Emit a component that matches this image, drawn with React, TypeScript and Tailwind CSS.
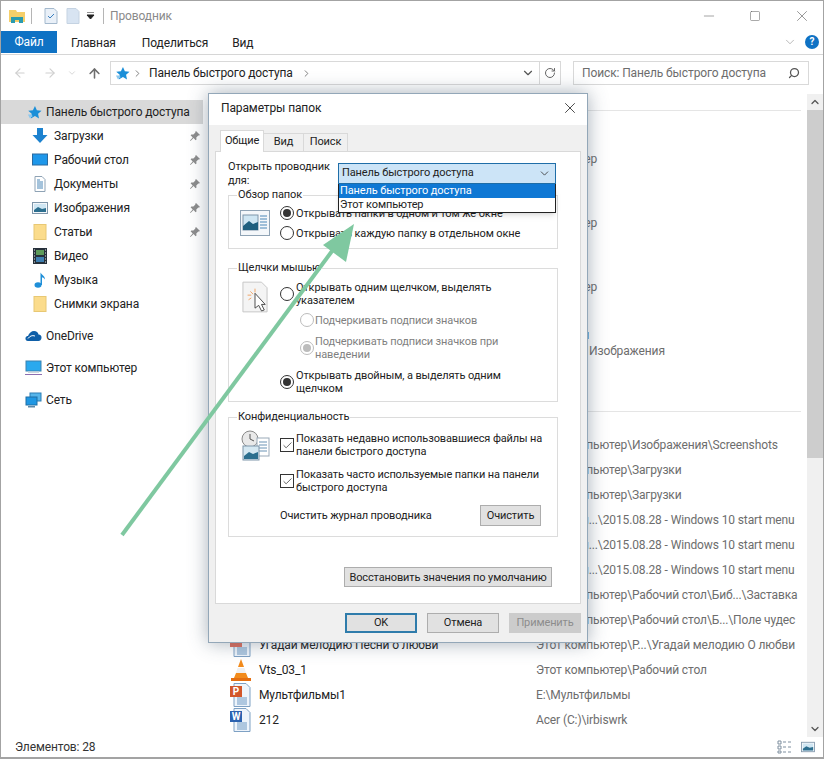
import React from "react";
import { Check, ChevronDown, ChevronRight, ChevronUp, RotateCw, Search, ArrowLeft, ArrowRight, ArrowUp, X, Minus, Square } from "lucide-react";

function Star({ s = 15 }: { s?: number }) {
  return (
    <svg width={s} height={s} viewBox="0 0 16 16" className="shrink-0">
      <path d="M8.500 1l2 4.600 5 .5-3.700 3.300 1 4.900-4.300-2.500L4 14.300l1-4.900L1.300 6.100l5-.5z" fill="#1b8fd8" />
      <path d="M1 10h4l1 2-3 2z" fill="#8cc8ee" />
    </svg>
  );
}
function Pin() {
  return (
    <svg width="12" height="12" viewBox="0 0 12 12" className="shrink-0">
      <path d="M7 1l4 4-1 .6-.7-.2-2 2 .2 2-.9.8-2-2.200L1.500 11 1 10.500 3.700 7.400 1.600 5.300l.8-.9 2 .2 2-2-.2-.7z" fill="#8d8d8d" />
    </svg>
  );
}
function Folder() {
  return (
    <svg width="14" height="16" viewBox="0 0 14 16" className="shrink-0">
      <rect x="1" y="0.500" width="12" height="15" fill="#fbdc8c" stroke="#e8c874" />
    </svg>
  );
}
function Download() {
  return (
    <svg width="16" height="16" viewBox="0 0 16 16" className="shrink-0">
      <path d="M5 0h6v7h4.500L8 15 .5 7H5z" fill="#1c82cf" />
    </svg>
  );
}
function Desktop() {
  return (
    <svg width="16" height="16" viewBox="0 0 16 16" className="shrink-0">
      <rect x="0.500" y="2" width="15" height="11" fill="#1e97ea" stroke="#2a6aa0" />
    </svg>
  );
}
function Doc() {
  return (
    <svg width="16" height="16" viewBox="0 0 16 16" className="shrink-0">
      <path d="M3 .5h7l3 3v12H3z" fill="#fff" stroke="#8fa3b5" />
      <path d="M5 4h3M5 6h6M5 8h6M5 10h6M5 12h6" stroke="#4a87b8" />
    </svg>
  );
}
function Pic({ w = 16, h = 14 }: { w?: number; h?: number }) {
  return (
    <svg width={w} height={h} viewBox="0 0 16 14" className="shrink-0">
      <rect x="0.500" y="1.500" width="15" height="11" fill="#f4f7fa" stroke="#7f96aa" />
      <rect x="2" y="3" width="12" height="8" fill="#cfe6f3" />
      <path d="M2 9l4-3 4 2 4-1v4H2z" fill="#2c6f8f" />
    </svg>
  );
}
function WindowPic() {
  return (
    <svg width="30" height="26" viewBox="0 0 30 26" className="shrink-0">
      <rect x="0.500" y="0.500" width="29" height="25" fill="#f4f7fa" stroke="#8fa3b5" />
      <rect x="3" y="5" width="15" height="15" fill="#cfe6f3" stroke="#7f96aa" />
      <path d="M3 16l6-5 4 3 5-2v8H3z" fill="#1f5f7f" />
      <path d="M20 6h7M20 9h7M20 12h7M20 15h7M20 18h7" stroke="#4a87b8" />
    </svg>
  );
}
function Video() {
  return (
    <svg width="14" height="16" viewBox="0 0 14 16" className="shrink-0">
      <rect width="14" height="16" fill="#26303a" />
      <rect x="3" y="2" width="8" height="5" fill="#5d9b5a" />
      <rect x="3" y="9" width="8" height="5" fill="#3f7fb0" />
      <path d="M1 2h1M1 5h1M1 8h1M1 11h1M1 14h1M12 2h1M12 5h1M12 8h1M12 11h1M12 14h1" stroke="#dfe6ea" />
    </svg>
  );
}
function Music() {
  return (
    <svg width="14" height="16" viewBox="0 0 14 16" className="shrink-0">
      <ellipse cx="5" cy="13" rx="3.500" ry="2.700" fill="#1f8fd8" />
      <path d="M7.500 13V.5c1 2.500 4.500 3 4.500 7-1-1.500-2.500-2.200-3-2.200V13z" fill="#1f8fd8" />
    </svg>
  );
}
function Cloud() {
  return (
    <svg width="17" height="12" viewBox="0 0 17 12" className="shrink-0">
      <path d="M3 11C1 11 .2 9.500.5 8c.3-1.500 1.500-2 2.500-2 1-3 3.500-5 6-5s4 1.500 4.500 3.500C15.500 4.500 16.800 6 16.500 8c-.3 2-1.500 3-3 3z" fill="#0f5fa8" />
      <path d="M3 8.500c2-2.500 4-3.500 7-2.500" stroke="#fff" fill="none" />
    </svg>
  );
}
function Computer() {
  return (
    <svg width="17" height="16" viewBox="0 0 17 16" className="shrink-0">
      <rect x="1" y="1" width="15" height="10" fill="#2aa9ee" stroke="#3b82b0" />
      <rect x="3" y="11.500" width="11" height="1.500" fill="#cfd8e0" />
      <rect y="14" width="17" height="1" fill="#8d6fb0" />
    </svg>
  );
}
function Net() {
  return (
    <svg width="17" height="16" viewBox="0 0 17 16" className="shrink-0">
      <rect x="5" y="1" width="11" height="8" fill="#57b5ea" stroke="#2c7fb5" />
      <rect x="1" y="5" width="11" height="8" fill="#1f97e3" stroke="#1f6fa5" />
      <rect x="3" y="14" width="7" height="1.500" fill="#5b88a8" />
    </svg>
  );
}
function Cone() {
  return (
    <svg width="22" height="24" viewBox="0 0 22 24">
      <path d="M11 1l3 8H8z" fill="#f28b1c" />
      <path d="M7.500 10h7l1.500 5H6z" fill="#f0f0f0" />
      <path d="M6 15h10l2 5H4z" fill="#f28b1c" />
      <path d="M1 20h20v3H1z" fill="#e56f10" />
    </svg>
  );
}
function FileIcon({ letter, color }: { letter: string; color: string }) {
  return (
    <svg width="24" height="24" viewBox="0 0 24 24">
      <path d="M5 .5h12l4 4v19H5z" fill="#eef4fb" stroke="#7ea1c4" />
      <path d="M8 15h10M8 17h10M8 19h10M8 21h10" stroke="#6f9ac4" />
      <rect x="1" y="3" width="12" height="11" fill={color} />
      <text x="7" y="12" fontSize="10" fontWeight="700" textAnchor="middle" fill="#fff">{letter}</text>
    </svg>
  );
}

const nav: [React.ReactNode, string, boolean][] = [
  [<Download />, "Загрузки", true],
  [<Desktop />, "Рабочий стол", true],
  [<Doc />, "Документы", true],
  [<Pic />, "Изображения", true],
  [<Folder />, "Статьи", true],
  [<Video />, "Видео", false],
  [<Music />, "Музыка", false],
  [<Folder />, "Снимки экрана", false],
];

const files: [React.ReactNode, string, string][] = [
  [null, "Скриншот", "Этот компьютер\\Изображения\\Screenshots"],
  [null, "Установка", "Этот компьютер\\Загрузки"],
  [null, "Архив", "Этот компьютер\\Загрузки"],
  [null, "Меню 1", "E:\\Статьи...\\2015.08.28 - Windows 10 start menu"],
  [null, "Меню 2", "E:\\Статьи...\\2015.08.28 - Windows 10 start menu"],
  [null, "Меню 3", "E:\\Статьи...\\2015.08.28 - Windows 10 start menu"],
  [null, "Заставка", "Этот компьютер\\Рабочий стол\\Биб...\\Заставка"],
  [null, "Поле чудес", "Этот компьютер\\Рабочий стол\\Б...\\Поле чудес"],
  [<FileIcon letter="" color="#e0705f" />, "Угадай мелодию Песни о любви", "Этот компьютер\\Р...\\Угадай мелодию О любви"],
  [<Cone />, "Vts_03_1", "Этот компьютер\\Рабочий стол"],
  [<FileIcon letter="P" color="#d2562a" />, "Мультфильмы1", "E:\\Мультфильмы"],
  [<FileIcon letter="W" color="#2b62b0" />, "212", "Acer (C:)\\irbiswrk"],
];

function Radio({ on, off }: { on?: boolean; off?: boolean }) {
  return (
    <span className={`flex h-3.5 w-3.5 shrink-0 items-center justify-center rounded-full border bg-white ${off ? "border-[#bcbcbc]" : "border-[#333333]"}`}>
      {on && <span className={`h-2 w-2 rounded-full ${off ? "bg-[#bcbcbc]" : "bg-[#333333]"}`} />}
    </span>
  );
}
function Box() {
  return (
    <span className="flex h-3.5 w-3.5 shrink-0 items-center justify-center border border-[#333333] bg-white">
      <Check size={11} strokeWidth={1.5} className="text-[#222222]" />
    </span>
  );
}
function Btn({ children, cls = "" }: { children: React.ReactNode; cls?: string }) {
  return <div className={`flex h-5 items-center justify-center border border-[#adadad] bg-[#e1e1e1] whitespace-nowrap ${cls}`}>{children}</div>;
}
function Group({ title, children, cls = "" }: { title: string; children: React.ReactNode; cls?: string }) {
  return (
    <fieldset className={`min-w-0 border border-[#dcdcdc] ${cls}`}>
      <legend className="ml-2 h-3.5 px-px leading-3.5">{title}</legend>
      {children}
    </fieldset>
  );
}

export default function App() {
  return (
    <div className="relative flex h-screen w-full flex-col overflow-hidden border-t border-r border-b-2 border-l border-[#a3a3a3] bg-white font-['Roboto','Liberation_Sans',sans-serif] text-xs tracking-[-0.01em] text-[#222222]">
      {/* title */}
      <div className="flex h-7.5 shrink-0 items-center pl-2">
        <svg width="16" height="16" viewBox="0 0 16 16">
          <path d="M0 2h7l1 2h8v10H0z" fill="#f5cf6a" />
          <path d="M2 9h12v6h-4v-3H6v3H2z" fill="#2a9bb0" />
        </svg>
        <span className="ml-1.5 h-4 border-l border-[#b5b5b5]" />
        <svg width="14" height="16" viewBox="0 0 14 16" className="ml-3">
          <path d="M1 .5h9l3 3v12H1z" fill="#e9f0f8" stroke="#a4b9cd" />
          <path d="M4 8l2 2 4-4" stroke="#3a7fc0" fill="none" />
        </svg>
        <svg width="14" height="16" viewBox="0 0 14 16" className="ml-2">
          <path d="M1 .5h9l3 3v12H1z" fill="#d8e4f2" stroke="#c5d3e2" />
        </svg>
        <svg width="9" height="8" viewBox="0 0 9 8" className="ml-1.5">
          <path d="M1 0h7M1 3h7L4.500 7z" stroke="#222" fill="#222" />
        </svg>
        <span className="ml-2 h-4 border-l border-[#b5b5b5]" />
        <span className="ml-1.5 text-[#8a8a8a]">Проводник</span>
        <div className="ml-auto flex items-center gap-8 pr-3">
          <Minus size={16} strokeWidth={1} className="text-[#777777]" />
          <Square size={12} strokeWidth={1} className="text-[#555555]" />
          <X size={18} strokeWidth={1} className="text-[#777777]" />
        </div>
      </div>
      {/* ribbon tabs */}
      <div className="flex h-6 shrink-0 items-start border-b border-[#d6d6d6]">
        <div className="flex h-5.5 w-14 items-center justify-center bg-[#0f72c4] text-white">Файл</div>
        <span className="mt-1 ml-3.5">Главная</span>
        <span className="mt-1 ml-6.5">Поделиться</span>
        <span className="mt-1 ml-6">Вид</span>
        <div className="mt-1 ml-auto flex items-center gap-2 pr-1">
          <ChevronDown size={14} strokeWidth={1} className="text-[#888888]" />
          <span className="flex h-3.5 w-3.5 items-center justify-center rounded-full bg-[#0f72c4] text-[10px] font-bold text-white">?</span>
        </div>
      </div>
      {/* address */}
      <div className="flex h-[39px] shrink-0 items-start pt-1.5">
        <div className="flex h-6 items-center pl-3">
          <ArrowLeft size={14} className="text-[#d0d0d0]" />
          <ArrowRight size={14} className="ml-4 text-[#d0d0d0]" />
          <ChevronDown size={10} className="ml-2.5 text-[#d0d0d0]" />
          <ArrowUp size={15} strokeWidth={2.5} className="ml-2.5 text-[#6e6e6e]" />
        </div>
        <div className="ml-2 flex h-6 w-[451px] items-center border border-[#d9d9d9] pl-1">
          <Star />
          <ChevronRight size={11} className="ml-0.5 text-[#777777]" />
          <span className="ml-1.5">Панель быстрого доступа</span>
          <ChevronRight size={11} className="ml-2 text-[#777777]" />
          <ChevronDown size={14} className="ml-auto text-[#555555]" />
          <span className="ml-1 flex h-full items-center border-l border-[#d9d9d9] px-1">
            <RotateCw size={12} className="text-[#666666]" />
          </span>
        </div>
        <div className="ml-3 flex h-6 w-59 items-center justify-between border border-[#d9d9d9] px-2 text-[#6d6d6d]">
          <span>Поиск: Панель быстрого доступа</span>
          <Search size={12} strokeWidth={2.5} className="-scale-x-100 text-[#555555]" />
        </div>
      </div>
      {/* main */}
      <div className="flex min-h-0 flex-1">
        <div className="flex w-52 shrink-0 flex-col pt-1.5">
          <div className="mr-1.5 flex h-6 items-center bg-[#d9d9d9] pl-6.5">
            <Star />
            <span className="ml-1">Панель быстрого доступа</span>
          </div>
          {nav.map(([icon, label, pin]) => (
            <div key={label} className="flex h-6 items-center pr-2 pl-7.75">
              <span className="flex w-4 justify-center">{icon}</span>
              <span className="ml-1.5">{label}</span>
              {pin && <span className="ml-auto"><Pin /></span>}
            </div>
          ))}
          <div className="mt-2 flex h-6 items-center pl-6">
            <Cloud />
            <span className="ml-1">OneDrive</span>
          </div>
          <div className="mt-2 flex h-6 items-center pl-6">
            <Computer />
            <span className="ml-1">Этот компьютер</span>
          </div>
          <div className="mt-2 flex h-6 items-center pl-6">
            <Net />
            <span className="ml-1">Сеть</span>
          </div>
        </div>
        <div className="min-w-0 flex-1 pt-4">
          <div className="mr-1.5 border-t border-[#e5e5e5] pt-4">
            {["Этот компьютер", "Этот компьютер", "Этот компьютер"].map((t, i) => (
              <div key={i} className="flex h-16 items-center">
                <div className="w-97 text-right text-[#6d6d6d]">{t}</div>
              </div>
            ))}
            <div className="h-16 pt-2 leading-4">
              <div className="w-95 text-right">Статьи</div>
              <div className="pl-95 text-[#6d6d6d]">Изображения</div>
            </div>
          </div>
          <div className="mt-7 mr-1.5 border-t border-[#e5e5e5] pt-5">
            {files.map(([icon, name, path], i) => (
              <div key={i} className="flex h-[25px] items-center whitespace-nowrap">
                <span className="ml-4 flex w-8 justify-center">{icon}</span>
                <span className="ml-0.5 w-[277px] shrink-0">{name}</span>
                <span className="text-[#6d6d6d]">{path}</span>
              </div>
            ))}
          </div>
        </div>
        <div className="flex w-4 shrink-0 flex-col items-center bg-[#f0f0f0]">
          <div className="flex h-4 shrink-0 items-center justify-center">
            <ChevronUp size={12} strokeWidth={2.5} className="text-[#555555]" />
          </div>
          <div className="h-87 w-full shrink-0 bg-[#cdcdcd]" />
          <div className="mt-auto flex h-4 items-center justify-center">
            <ChevronDown size={12} strokeWidth={2.5} className="text-[#555555]" />
          </div>
        </div>
      </div>
      {/* status */}
      <div className="flex h-5 shrink-0 items-center justify-between pr-2 pl-3.5 text-[#333333]">
        <span>Элементов: 28</span>
        <div className="flex items-center gap-2">
          <svg width="16" height="14" viewBox="0 0 16 14">
            <path d="M1 1h3v3H1zM1 6h3v3H1zM1 11h3v2H1z" fill="none" stroke="#7f8f9f" />
            <path d="M6 2h3M11 2h3M6 7h3M11 7h3M6 12h3M11 12h3" stroke="#7f8f9f" />
          </svg>
          <Pic w={14} h={12} />
        </div>
      </div>

      {/* dialog */}
      <div className="absolute top-[92px] left-[207px] flex h-[550px] w-[380px] flex-col border border-[#93a7b8] bg-[#f0f0f0] text-[11px] shadow-[0_0_18px_rgba(60,80,100,0.45)]">
        <div className="flex h-[31px] shrink-0 items-center justify-between bg-white pr-2 pb-1 pl-3 text-xs">
          <span>Параметры папок</span>
          <X size={18} strokeWidth={1} className="text-[#111111]" />
        </div>
        <div className="mt-1.5 flex h-5 shrink-0 items-end pl-2.75">
          <div className="z-10 -mb-px flex h-5.5 w-11 items-center justify-center border border-b-0 border-[#d9d9d9] bg-white">Общие</div>
          <div className="flex h-4.5 w-10 items-center justify-center border-t border-r border-[#d9d9d9]">Вид</div>
          <div className="flex h-4.5 w-11 items-center justify-center border-t border-r border-[#d9d9d9]">Поиск</div>
        </div>
        <div className="relative mx-1.5 flex h-[453px] shrink-0 flex-col border border-[#d9d9d9] bg-white pt-2 pr-[22px] pl-3 leading-[13px] whitespace-nowrap">
          <div className="h-7 shrink-0 leading-3.5">
            Открыть проводник<br />для:
          </div>
          <Group title="Обзор папок" cls="h-[61px] shrink-0">
            <div className="flex items-start pt-1 pl-2.75">
              <span className="mt-1 flex w-7.5 justify-center"><WindowPic /></span>
              <div className="ml-2.5 flex flex-col gap-1.5">
                <div className="flex items-center gap-0.5"><Radio on /><span>Открывать папки в одном и том же окне</span></div>
                <div className="flex items-center gap-0.5"><Radio /><span>Открывать каждую папку в отдельном окне</span></div>
              </div>
            </div>
          </Group>
          <Group title="Щелчки мышью" cls="mt-3 h-[141px] shrink-0">
            <div className="flex items-start pt-1.5 pl-2.75">
              <span className="flex w-7.5 justify-center">
                <svg width="26" height="32" viewBox="0 0 28 34" className="shrink-0">
                  <path d="M1 1h20l6 6v26H1z" fill="#f4f4f4" stroke="#c2c2c2" />
                  <path d="M9 11l3 3M14 8v4M6 15h4M7 20l3-2" stroke="#f0a060" />
                  <path d="M14 13v16l4-3 3 6 3-1-3-6h4z" fill="#fff" stroke="#444" />
                </svg>
              </span>
              <div className="ml-2.5 flex flex-col gap-1.5">
                <div className="flex items-center gap-0.5"><Radio /><span>Открывать одним щелчком, выделять<br />указателем</span></div>
                <div className="ml-5 flex items-center gap-px text-[#7f7f7f]"><Radio off /><span>Подчеркивать подписи значков</span></div>
                <div className="mt-0.5 ml-5 flex items-center gap-px text-[#7f7f7f]"><Radio off on /><span>Подчеркивать подписи значков при<br />наведении</span></div>
                <div className="mt-0.5 flex items-center gap-0.5"><Radio on /><span>Открывать двойным, а выделять одним<br />щелчком</span></div>
              </div>
            </div>
          </Group>
          <Group title="Конфиденциальность" cls="mt-2 h-[127px] shrink-0">
            <div className="flex items-start pt-1.5 pl-2.75">
              <svg width="30" height="32" viewBox="0 0 30 32" className="shrink-0">
                <circle cx="10" cy="9" r="8" fill="#e9e9e9" stroke="#8a8a8a" />
                <path d="M10 4v5l4 2" stroke="#555" fill="none" />
                <rect x="17" y="8" width="12" height="18" fill="#fff" stroke="#9aa9b8" />
                <path d="M19 12h8M19 15h8M19 18h8M19 21h8" stroke="#6a93b5" />
                <rect x="3" y="16" width="16" height="14" fill="#d5e8f2" stroke="#7f96aa" />
                <path d="M4 26l5-4 4 2 5-2v7H4z" fill="#2c6f8f" />
              </svg>
              <div className="ml-2.5 flex flex-col gap-2.5 pt-0.5">
                <div className="flex items-center gap-0.5"><Box /><span>Показать недавно использовавшиеся файлы на<br />панели быстрого доступа</span></div>
                <div className="flex items-center gap-0.5"><Box /><span>Показать часто используемые папки на панели<br />быстрого доступа</span></div>
              </div>
            </div>
            <div className="mt-2.75 flex items-center justify-between pr-4 pl-12.75">
              <span>Очистить журнал проводника</span>
              <Btn cls="h-[21px] w-[61px]">Очистить</Btn>
            </div>
          </Group>
          <div className="mt-7.5 mr-1.5 flex justify-end">
            <Btn cls="w-52">Восстановить значения по умолчанию</Btn>
          </div>
        </div>
        <div className="flex flex-1 items-center justify-end gap-2.5 pr-1.5">
          <div className="flex h-5 w-18 items-center justify-center border-2 border-[#2f7cab] bg-[#e1e1e1]">OK</div>
          <Btn cls="w-18">Отмена</Btn>
          <div className="flex h-5 w-18 items-center justify-center border border-[#cccccc] bg-[#cccccc] text-[#8c8c8c]">Применить</div>
        </div>

        {/* combo */}
        <div className="absolute top-[69px] left-[129px] w-[218px]">
          <div className="flex h-[21px] items-center justify-between border border-[#1f6ea8] bg-[#cce4f7] pr-1 pl-0.75">
            <span>Панель быстрого доступа</span>
            <ChevronDown size={13} strokeWidth={1.5} className="text-[#333333]" />
          </div>
          <div className="border border-t-0 border-[#222222] bg-white leading-3.5 shadow-md">
            <div className="bg-[#0f78d4] pl-px text-white">Панель быстрого доступа</div>
            <div className="pl-px">Этот компьютер</div>
          </div>
        </div>
      </div>

      {/* annotation arrow */}
      <svg width="824" height="759" viewBox="0 0 824 759" className="pointer-events-none absolute -top-px -left-px">
        <path d="M122 535L338 243" stroke="#7fc8a0" strokeWidth="4" fill="none" />
        <path d="M354 224L323 245 346 262z" fill="#7fc8a0" />
      </svg>
    </div>
  );
}
